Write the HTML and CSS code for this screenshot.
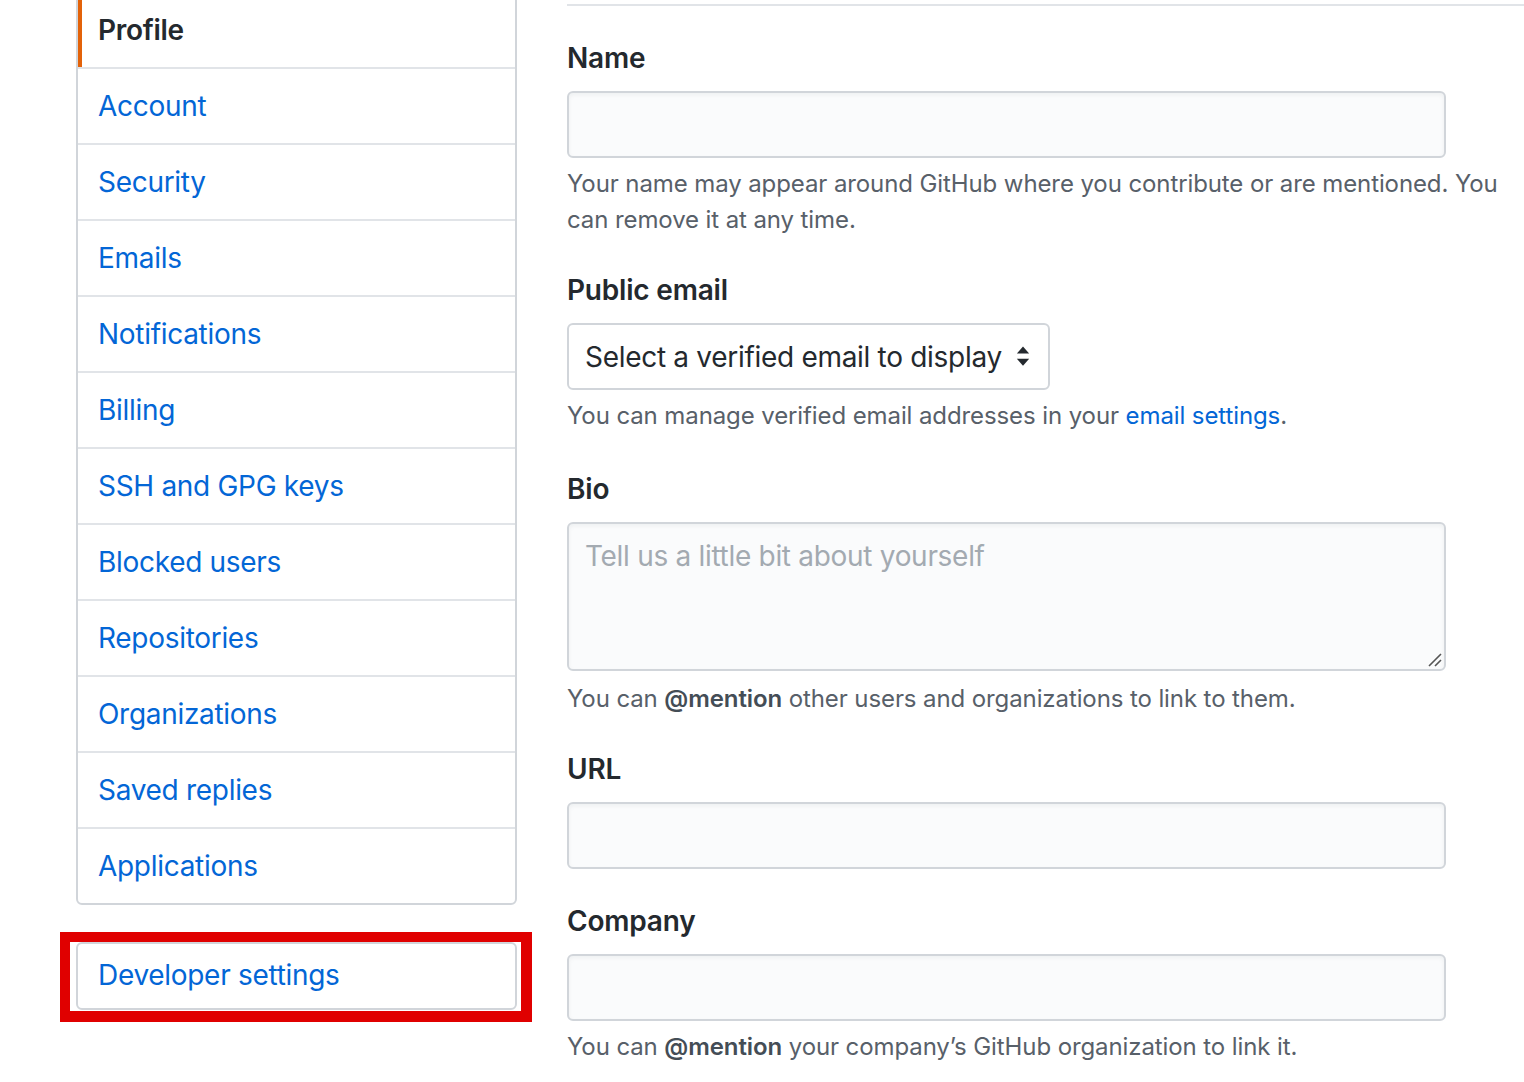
FILE: index.html
```html
<!DOCTYPE html>
<html lang="en">
<head>
<meta charset="utf-8">
<title>Public profile</title>
<link rel="stylesheet" href="styles.css">
</head>
<body>
<div class="layout">
  <aside class="sidebar">
    <nav class="menu">
      <a class="menu-item selected" href="#">Profile</a>
      <a class="menu-item" href="#">Account</a>
      <a class="menu-item" href="#">Security</a>
      <a class="menu-item" href="#">Emails</a>
      <a class="menu-item" href="#">Notifications</a>
      <a class="menu-item" href="#">Billing</a>
      <a class="menu-item" href="#">SSH and GPG keys</a>
      <a class="menu-item" href="#">Blocked users</a>
      <a class="menu-item" href="#">Repositories</a>
      <a class="menu-item" href="#">Organizations</a>
      <a class="menu-item" href="#">Saved replies</a>
      <a class="menu-item" href="#">Applications</a>
    </nav>
    <div class="dev-wrap">
      <nav class="menu dev-menu">
        <a class="menu-item" href="#">Developer settings</a>
      </nav>
      <span class="highlight"></span>
    </div>
  </aside>
  <main class="main">
    <div class="subhead"></div>
    <div class="form-group">
      <label class="label">Name</label>
      <input class="form-control" type="text">
      <p class="note">Your name may appear around GitHub where you contribute or are mentioned. You can remove it at any time.</p>
    </div>
    <div class="form-group group-email">
      <label class="label">Public email</label>
      <div class="select">
        <span>Select a verified email to display</span>
        <svg class="select-arrow" width="16" height="24" viewBox="0 0 16 24"><path d="M1 8 L8 0 L15 8 Z" fill="#24292e"/><path d="M1 14 L8 22 L15 14 Z" fill="#24292e"/></svg>
      </div>
      <p class="note">You can manage verified email addresses in your <a href="#" class="link">email settings</a>.</p>
    </div>
    <div class="form-group">
      <label class="label">Bio</label>
      <div class="textarea">
        <span class="placeholder">Tell us a little bit about yourself</span>
        <svg class="grip" width="14" height="14" viewBox="0 0 14 14"><path d="M1 13 L13 1 M7 13 L13 7" stroke="#555" stroke-width="1.6" fill="none"/></svg>
      </div>
      <p class="note note-bio">You can <strong>@mention</strong> other users and organizations to link to them.</p>
    </div>
    <div class="form-group">
      <label class="label">URL</label>
      <input class="form-control" type="text">
    </div>
    <div class="form-group">
      <label class="label">Company</label>
      <input class="form-control" type="text">
      <p class="note">You can <strong>@mention</strong> your company’s GitHub organization to link it.</p>
    </div>
  </main>
</div>
</body>
</html>
```
FILE: styles.css
```css
html, body {
  margin: 0;
  padding: 0;
  background: #fff;
  overflow: hidden;
}
body {
  font-family: Inter, "Liberation Sans", sans-serif;
  color: #24292e;
  width: 1524px;
  height: 1082px;
}
.layout {
  display: flex;
  margin-top: -12px;
  padding-left: 76px;
}
.sidebar {
  width: 441px;
  flex: none;
  margin-right: 50px;
  margin-top: 3px;
}
.menu {
  display: flex;
  flex-direction: column;
  border: 2px solid #d1d5da;
  border-radius: 6px;
  background: #fff;
  overflow: hidden;
}
.menu-item {
  position: relative;
  display: block;
  height: 74px;
  line-height: 74px;
  padding-left: 20px;
  font-size: 28px;
  letter-spacing: -0.3px;
  color: #0366d6;
  text-decoration: none;
  border-top: 2px solid #e1e4e8;
}
.menu-item:first-child {
  border-top: 0;
}
.menu-item.selected {
  color: #24292e;
  font-weight: 600;
}
.menu-item.selected::before {
  content: "";
  position: absolute;
  left: 0;
  top: 0;
  bottom: 0;
  width: 4px;
  background: #e36209;
}
.dev-wrap {
  position: relative;
  margin-top: 37px;
}
.dev-menu .menu-item {
  height: 64px;
  line-height: 62px;
}
.highlight {
  position: absolute;
  left: -16px;
  top: -10px;
  width: 451px;
  height: 69px;
  border: 10px solid #e00000;
  border-right-width: 11px;
  border-bottom-width: 11px;
  pointer-events: none;
}
.main {
  flex: 1;
  min-width: 0;
}
.subhead {
  height: 16px;
  border-bottom: 2px solid #e1e4e8;
  margin-bottom: 32px;
}
.form-group {
  margin-bottom: 32px;
}
.group-email {
  margin-bottom: 35px;
}
.label {
  display: block;
  font-size: 28px;
  font-weight: 600;
  letter-spacing: -0.2px;
  line-height: 40px;
  margin-bottom: 13px;
}
.form-control {
  display: block;
  box-sizing: border-box;
  width: 879px;
  height: 67px;
  margin: 0;
  padding: 0 16px;
  background: #fafbfc;
  border: 2px solid #d1d5da;
  border-radius: 6px;
  box-shadow: inset 0 2px 4px rgba(27, 31, 35, 0.05);
  font-size: 28px;
  font-family: inherit;
}
.select {
  box-sizing: border-box;
  width: 483px;
  height: 67px;
  display: flex;
  align-items: center;
  justify-content: space-between;
  padding: 0 18px 0 16px;
  border: 2px solid #d1d5da;
  border-radius: 6px;
  background: #fff;
  font-size: 28px;
  letter-spacing: -0.3px;
  color: #24292e;
}
.select-arrow {
  width: 14px;
  height: 22px;
}
.textarea {
  position: relative;
  box-sizing: border-box;
  width: 879px;
  height: 149px;
  padding: 12px 16px;
  background: #fafbfc;
  border: 2px solid #d1d5da;
  border-radius: 6px;
  box-shadow: inset 0 2px 4px rgba(27, 31, 35, 0.05);
  font-size: 28px;
  letter-spacing: -0.3px;
  line-height: 40px;
}
.placeholder {
  color: #a3aab1;
}
.grip {
  position: absolute;
  right: 2px;
  bottom: 2px;
}
.note {
  margin: 8px 0 0;
  font-size: 24px;
  letter-spacing: -0.1px;
  line-height: 36px;
  color: #586069;
}
.note-bio {
  margin-top: 10px;
}
.note strong {
  color: #444d56;
  font-weight: 600;
}
.link {
  color: #0366d6;
  text-decoration: none;
}
```
